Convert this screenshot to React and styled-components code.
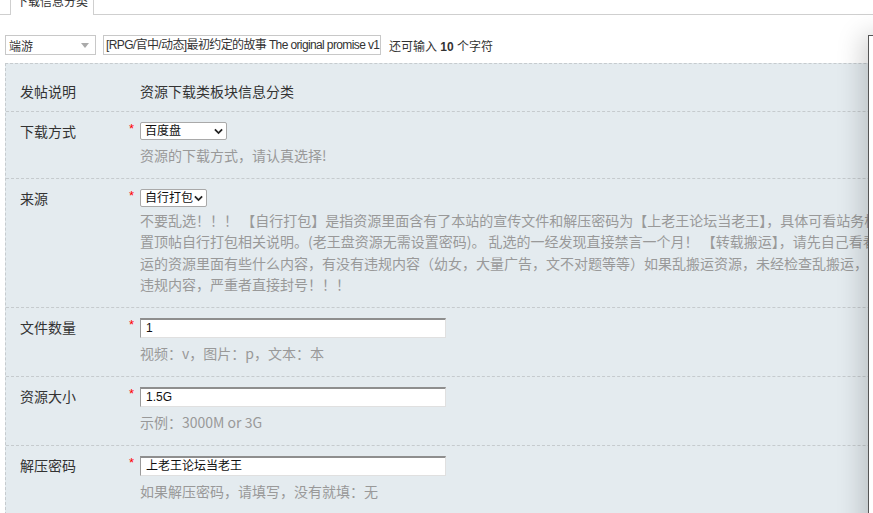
import React from 'react'
import styled, { createGlobalStyle } from 'styled-components'

const GlobalStyle = createGlobalStyle`
    html, body {
        margin: 0;
        padding: 0;
        background: #fff;
        overflow: hidden;
    }
    body {
        font-family: "Noto Sans CJK SC", "Noto Sans", sans-serif;
        font-size: 14px;
        color: #333;
    }
`

const CJK = `"Liberation Sans", "Noto Sans CJK SC", sans-serif`

const sourceLines = [
    '不要乱选！！！ 【自行打包】是指资源里面含有了本站的宣传文件和解压密码为【上老王论坛当老王】，具体可看站务板块',
    '置顶帖自行打包相关说明。(老王盘资源无需设置密码)。 乱选的一经发现直接禁言一个月！ 【转载搬运】，请先自己看看搬',
    '运的资源里面有些什么内容，有没有违规内容（幼女，大量广告，文不对题等等）如果乱搬运资源，未经检查乱搬运，查出',
    '违规内容，严重者直接封号！！！',
]

function Chevron() {
    return (
        <svg width="9" height="7" viewBox="0 0 10 7">
            <path d="M1 1.2 L5 5.2 L9 1.2" fill="none" stroke="#222" strokeWidth="2" />
        </svg>
    )
}

function NativeSelect({ width, value }) {
    return (
        <SelectWrap $w={width}>
            <span>{value}</span>
            <i><Chevron /></i>
        </SelectWrap>
    )
}

function Row({ label, required, first, children }) {
    return (
        <FormRow $first={first}>
            <Label>{label}</Label>
            <Star>{required ? '*' : ''}</Star>
            <Cell>{children}</Cell>
        </FormRow>
    )
}

function App() {
    return (
        <Page>
            <GlobalStyle />
            <TabBar>
                <Tab>下载信息分类</Tab>
            </TabBar>
            <TitleLine>
                <TypeSelect>
                    <span>端游</span>
                    <svg width="8" height="5" viewBox="0 0 8 5">
                        <path d="M0 0 L8 0 L4 5 Z" fill="#aaa" />
                    </svg>
                </TypeSelect>
                <TitleInput>[RPG/官中/动态]最初约定的故事 The original promise v1</TitleInput>
                <Counter>还可输入 <b>10</b> 个字符</Counter>
            </TitleLine>
            <Board>
                <Row label="发帖说明" first>
                    <Plain>资源下载类板块信息分类</Plain>
                </Row>
                <Row label="下载方式" required>
                    <NativeSelect width={87} value="百度盘" />
                    <Hint>资源的下载方式，请认真选择!</Hint>
                </Row>
                <Row label="来源" required>
                    <NativeSelect width={67} value="自行打包" />
                    <Hint $multi>
                        {sourceLines.map((l) => (
                            <div key={l}>{l}</div>
                        ))}
                    </Hint>
                </Row>
                <Row label="文件数量" required>
                    <TextField>1</TextField>
                    <Hint>视频：v，图片：p，文本：本</Hint>
                </Row>
                <Row label="资源大小" required>
                    <TextField>1.5G</TextField>
                    <Hint>示例：3000M or 3G</Hint>
                </Row>
                <Row label="解压密码" required>
                    <TextField>上老王论坛当老王</TextField>
                    <Hint>如果解压密码，请填写，没有就填：无</Hint>
                </Row>
            </Board>
            <SidePanel />
        </Page>
    )
}

const Page = styled.div`
    position: relative;
    width: 873px;
    height: 513px;
    overflow: hidden;
`

const TabBar = styled.div`
    height: 34px;
    margin-top: -20px;
    padding-left: 10px;
    border-bottom: 1px solid #cfcfcf;
    display: flex;
    align-items: flex-end;
`

const Tab = styled.div`
    width: 84px;
    height: 35px;
    margin-bottom: -1px;
    padding-top: 10px;
    border: 1px solid #cfcfcf;
    border-bottom: none;
    background: #fff;
    font-size: 12px;
    line-height: 20px;
    text-align: center;
    color: #333;
    box-sizing: border-box;
`

const TitleLine = styled.div`
    display: flex;
    align-items: center;
    margin: 20px 0 0 5px;
    height: 20px;
`

const TypeSelect = styled.div`
    width: 91px;
    height: 20px;
    box-sizing: border-box;
    border: 1px solid #c8c8c8;
    background: #fff;
    display: flex;
    align-items: center;
    justify-content: space-between;
    padding: 0 6px 0 3px;
    font-family: ${CJK};
    font-size: 12px;
    color: #333;
`

const TitleInput = styled.div`
    width: 278px;
    height: 20px;
    margin-left: 7px;
    box-sizing: border-box;
    border: 1px solid #c8c8c8;
    background: #fff;
    padding: 0 2px;
    font-family: ${CJK};
    font-size: 12px;
    letter-spacing: -0.62px;
    line-height: 18px;
    color: #333;
    white-space: nowrap;
    overflow: hidden;
`

const Counter = styled.span`
    margin-left: 8px;
    font-family: ${CJK};
    font-size: 12px;
    color: #333;
    white-space: nowrap;
    b {
        font-weight: bold;
    }
`

const Board = styled.div`
    margin: 8px 0 0 5px;
    width: 1100px;
    padding-top: 8px;
    background: #e4ebef;
    border-top: 1px dashed #c6cbce;
    border-left: 1px dashed #c6cbce;
`

const FormRow = styled.div`
    display: flex;
    align-items: flex-start;
    padding: 10px 0 ${(p) => (p.$first ? '9px' : '12px')} 14px;
    border-bottom: 1px dashed #c6cbce;
`

const Label = styled.div`
    width: 109px;
    min-height: 20px;
    line-height: 19px;
    font-size: 14px;
    color: #333;
`

const Star = styled.div`
    width: 11px;
    color: #f00;
    font-family: ${CJK};
    font-size: 13px;
    line-height: 14px;
`

const Cell = styled.div`
    display: flex;
    flex-direction: column;
    align-items: flex-start;
`

const Plain = styled.div`
    font-size: 14px;
    line-height: 19px;
    color: #333;
`

const SelectWrap = styled.div`
    position: relative;
    width: ${(p) => p.$w}px;
    height: 18px;
    box-sizing: border-box;
    border: 1px solid #a9a9a9;
    border-radius: 2px;
    background: #fff;
    font-family: ${CJK};
    font-size: 12px;
    line-height: 16px;
    color: #111;
    padding-left: 4px;
    white-space: nowrap;
    i {
        position: absolute;
        right: 3px;
        top: 5px;
        line-height: 0;
        background: #fff;
        padding-left: 1px;
    }
`

const TextField = styled.div`
    width: 306px;
    height: 20px;
    box-sizing: border-box;
    border: 1px solid #e0e0e0;
    border-top: 2px solid #8e8e8e;
    border-left: 1px solid #9a9a9a;
    background: #fff;
    padding-left: 5px;
    font-family: ${CJK};
    font-size: 12px;
    line-height: 17px;
    color: #111;
`

const Hint = styled.div`
    margin-top: ${(p) => (p.$multi ? '3px' : '4px')};
    font-size: 14px;
    line-height: ${(p) => (p.$multi ? '21.3px' : '22px')};
    color: #999;
    white-space: nowrap;
`

const SidePanel = styled.div`
    position: absolute;
    left: 868px;
    top: 35px;
    width: 300px;
    height: 600px;
    background: #fff;
    border-left: 1px solid #555;
    border-top: 1px solid #555;
    box-shadow: -6px 0 24px rgba(0, 0, 0, 0.18);
`

export default App
